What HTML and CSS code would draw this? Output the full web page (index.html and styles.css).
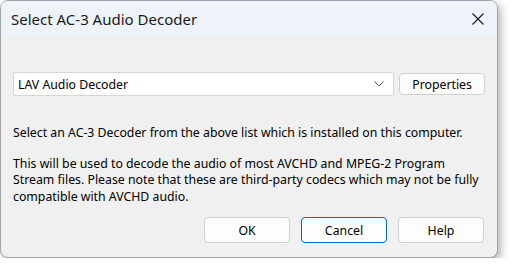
FILE: index.html
```html
<!DOCTYPE html>
<html>
    <head>
        <title>Select AC-3 Audio Decoder</title>
        <meta charset="UTF-8">
        <link rel="stylesheet" href="styles.css">
    </head>
    <body>
        <div class="dialog">
            <div class="titlebar">
                <span class="title">Select AC-3 Audio Decoder</span>
                <svg class="close" width="12" height="12" viewBox="0 0 12 12">
                    <path d="M0.5 0.5 L11.5 11.5 M11.5 0.5 L0.5 11.5" stroke="#1a1a1a" stroke-width="1.1" fill="none"/>
                </svg>
            </div>
            <div class="content">
                <div class="row">
                    <div class="combo">
                        <span>LAV Audio Decoder</span>
                        <svg class="chevron" width="10" height="6" viewBox="0 0 10 6">
                            <path d="M0.5 0.5 L5 5 L9.5 0.5" stroke="#5a5a5a" stroke-width="1" fill="none"/>
                        </svg>
                    </div>
                    <button class="btn props">Properties</button>
                </div>
                <p class="text">Select an AC-3 Decoder from the above list which is installed on this computer.</p>
                <p class="text">This will be used to decode the audio of most AVCHD and MPEG-2 Program Stream files. Please note that these are third-party codecs which may not be fully compatible with AVCHD audio.</p>
                <div class="buttons">
                    <button class="btn">OK</button>
                    <button class="btn default">Cancel</button>
                    <button class="btn">Help</button>
                </div>
            </div>
        </div>
    </body>
</html>
```
FILE: styles.css
```css
body{
    margin: 0;
    background: #ffffff;
    font-family: "Noto Sans", "Open Sans", sans-serif;
}
.dialog{
    width: 496px;
    height: 256px;
    border: 1px solid #a3a3a3;
    border-radius: 8px;
    background: #f0f0f0;
    box-shadow: 3px 4px 8px rgba(0, 0, 0, 0.3);
    overflow: hidden;
    display: flex;
    flex-direction: column;
}
.titlebar{
    height: 36px;
    background: #eef3f9;
    display: flex;
    align-items: center;
    justify-content: space-between;
    padding: 0 13px 0 10px;
}
.title{
    font-size: 15px;
    color: #1a1a1a;
}
.close{
    display: block;
}
.content{
    flex: 1;
    display: flex;
    flex-direction: column;
    padding: 35px 12px 14px 12px;
    font-size: 12.3px;
    color: #000000;
}
.row{
    display: flex;
    align-items: center;
    gap: 5px;
}
.combo{
    height: 22px;
    width: 367px;
    background: #ffffff;
    border: 1px solid #d6d6d6;
    border-radius: 2px;
    display: flex;
    align-items: center;
    justify-content: space-between;
    padding: 0 9px 0 4px;
}
.btn{
    font-family: "Noto Sans", "Open Sans", sans-serif;
    font-size: 12.3px;
    color: #000000;
    background: #fdfdfd;
    border: 1px solid #d0d0d0;
    border-radius: 4px;
    height: 26px;
    width: 86px;
    padding: 0;
}
.props{
    height: 22px;
}
.default{
    border-color: #0067c0;
}
.text{
    margin: 29px 0 0 0;
    line-height: 16.5px;
    padding-right: 2px;
}
.text + .text{
    margin-top: 14px;
}
.buttons{
    margin-top: auto;
    display: flex;
    justify-content: flex-end;
    gap: 11px;
    padding-right: 1px;
}
```
